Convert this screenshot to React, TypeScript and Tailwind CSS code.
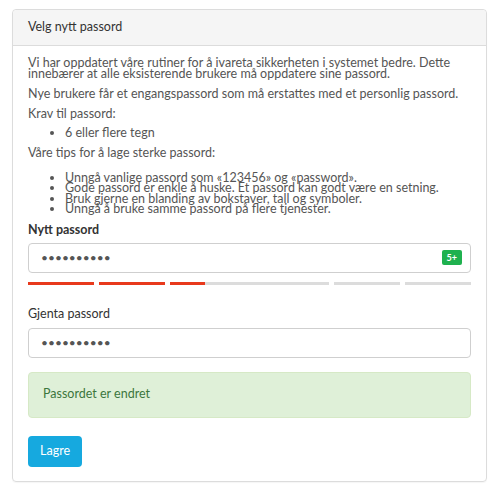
import { useState } from "react"

const tips = [
  "Unngå vanlige passord som «123456» og «password».",
  "Gode passord er enkle å huske. Et passord kan godt være en setning.",
  "Bruk gjerne en blanding av bokstaver, tall og symboler.",
  "Unngå å bruke samme passord på flere tjenester.",
]

function StrengthBar() {
  return (
    <div className="mt-[9px] flex gap-[5px]">
      <div className="h-[3px] w-[66px] bg-[#e8391c]" />
      <div className="h-[3px] w-[66px] bg-[#e8391c]" />
      <div className="flex h-[3px] flex-1 bg-[#dcdcdc]">
        <div className="h-full w-[35px] bg-[#e8391c]" />
      </div>
      <div className="h-[3px] w-[66px] bg-[#dcdcdc]" />
      <div className="h-[3px] w-[66px] bg-[#dcdcdc]" />
    </div>
  )
}

export default function App() {
  const [pw, setPw] = useState("hemmelig12")
  const [pw2, setPw2] = useState("hemmelig12")

  return (
    <div className="min-h-[498px] bg-white pt-[9px] pl-[12px] pr-[13px] font-['Lato','Liberation_Sans',sans-serif] text-[#555]">
      <div className="rounded-[4px] border border-[#dcdcdc] shadow-[0_1px_1px_rgba(0,0,0,0.04)]">
        <div className="flex h-[36px] items-center rounded-t-[4px] border-b border-[#dcdcdc] bg-[#f5f5f5] px-[15px] text-[12.5px] text-[#333]">
          Velg nytt passord
        </div>

        <div className="px-[15px] pt-[12px] pb-[14px] text-[12.5px] leading-[10.5px]">
          <p>
            Vi har oppdatert våre rutiner for å ivareta sikkerheten i systemet bedre. Dette
            innebærer at alle eksisterende brukere må oppdatere sine passord.
          </p>
          <p className="mt-[9.5px]">Nye brukere får et engangspassord som må erstattes med et personlig passord.</p>
          <p className="mt-[9.5px]">Krav til passord:</p>
          <ul className="mt-[9px] list-disc pl-[37px]">
            <li>6 eller flere tegn</li>
          </ul>
          <p className="mt-[9.5px]">Våre tips for å lage sterke passord:</p>
          <ul className="mt-[14px] list-disc pl-[37px]">
            {tips.map((t) => (
              <li key={t}>{t}</li>
            ))}
          </ul>

          <label className="mt-[8px] block text-[12.5px] font-bold leading-[14px] text-[#333]">Nytt passord</label>
          <div className="relative mt-[6px]">
            <input
              type="password"
              value={pw}
              onChange={(e) => setPw(e.target.value)}
              className="h-[30px] w-full rounded-[4px] border border-[#cfcfcf] px-[12px] text-[12px] text-[#555] outline-none"
            />
            <span className="absolute top-[7px] right-[9px] rounded-[2px] bg-[#1fb14f] px-[5px] text-[9px] leading-[15px] font-bold text-white">
              5+
            </span>
          </div>
          <StrengthBar />

          <label className="mt-[22px] block text-[12.5px] leading-[14px] text-[#333]">Gjenta passord</label>
          <input
            type="password"
            value={pw2}
            onChange={(e) => setPw2(e.target.value)}
            className="mt-[7px] h-[30px] w-full rounded-[4px] border border-[#cfcfcf] px-[12px] text-[12px] text-[#555] outline-none"
          />

          <div className="mt-[14px] flex h-[46px] items-center rounded-[4px] border border-[#d6e9c6] bg-[#dff0d8] px-[14px] text-[12.5px] text-[#3c763d]">
            Passordet er endret
          </div>

          <button className="mt-[18px] h-[31px] rounded-[4px] bg-[#16a9df] px-[12px] text-[12.5px] text-white">
            Lagre
          </button>
        </div>
      </div>
    </div>
  )
}
